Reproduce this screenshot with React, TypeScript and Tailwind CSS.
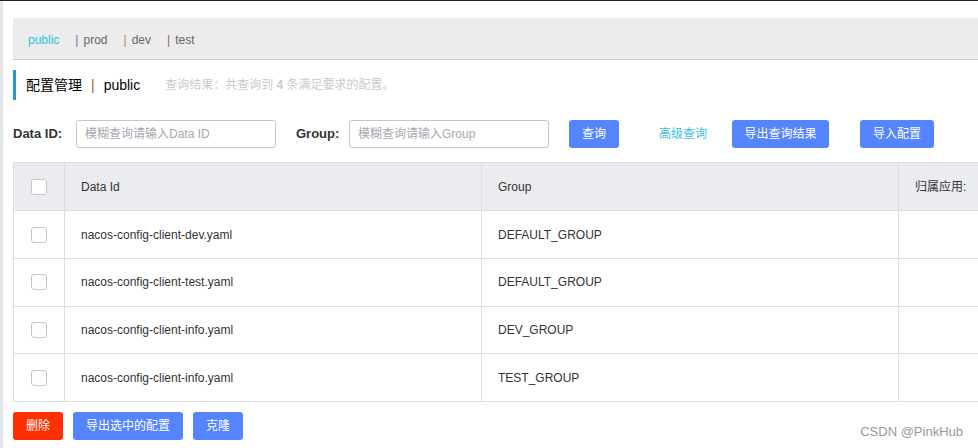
const rows = [
  { dataId: 'nacos-config-client-dev.yaml', group: 'DEFAULT_GROUP' },
  { dataId: 'nacos-config-client-test.yaml', group: 'DEFAULT_GROUP' },
  { dataId: 'nacos-config-client-info.yaml', group: 'DEV_GROUP' },
  { dataId: 'nacos-config-client-info.yaml', group: 'TEST_GROUP' },
];

const namespaces = [
  { name: 'prod', bar: 'text-[#6f6fa6]' },
  { name: 'dev', bar: 'text-[#c8843a]' },
  { name: 'test', bar: 'text-[#8c6458]' },
];

function Checkbox() {
  return <span className="block w-[16px] h-[16px] rounded-[3px] border border-[#c4c6cf] bg-white" />;
}

function Btn({ label, className }: { label: string; className?: string }) {
  return (
    <button
      className={`h-[28px] rounded-[3px] text-white text-[12px] flex items-center justify-center ${className ?? 'bg-[#5584ff]'}`}
    >
      {label}
    </button>
  );
}

export default function App() {
  return (
    <div className="relative w-full h-[448px] bg-white border-t border-[#1f2326] flex overflow-hidden font-['Liberation_Sans','Noto_Sans_CJK_SC',sans-serif] text-[#333]">
      <div className="w-[3px] shrink-0 bg-[#e3e6eb]" />
      <div className="flex-1 min-w-0 pl-[10px] overflow-hidden">
        {/* namespaces */}
        <div className="mt-[17px] h-[42px] bg-[#ececec] border-b border-[#cccccc] flex items-center pl-[15px] pt-[3px] text-[12px] text-[#666]">
          <span className="text-[#29c3e6] mr-[16px]">public</span>
          {namespaces.map((ns) => (
            <span key={ns.name} className="mr-[16px]">
              <span className={`${ns.bar} mr-[5px]`}>|</span>
              {ns.name}
            </span>
          ))}
        </div>

        {/* title */}
        <div className="mt-[10px] h-[30px] border-l-[3px] border-[#1e9bd3] flex items-center pl-[10px]">
          <span className="text-[14px] text-black">配置管理</span>
          <span className="text-[14px] text-[#a0632f] mx-[9px]">|</span>
          <span className="text-[14px] text-black">public</span>
          <span className="ml-[25px] text-[12px] text-[#c8cad0]">
            查询结果：共查询到 <b>4</b> 条满足要求的配置。
          </span>
        </div>

        {/* search */}
        <div className="mt-[20px] h-[28px] flex items-center">
          <span className="text-[13px] font-bold text-[#333] w-[50px]">Data ID:</span>
          <input
            placeholder="模糊查询请输入Data ID"
            className="ml-[13px] w-[200px] h-[28px] rounded-[3px] border border-[#c4c6cf] px-[8px] text-[12px] placeholder:text-[#a5a8b0] outline-none"
          />
          <span className="ml-[20px] text-[13px] font-bold text-[#333] w-[41px]">Group:</span>
          <input
            placeholder="模糊查询请输入Group"
            className="ml-[12px] w-[200px] h-[28px] rounded-[3px] border border-[#c4c6cf] px-[8px] text-[12px] placeholder:text-[#a5a8b0] outline-none"
          />
          <Btn label="查询" className="ml-[20px] w-[50px] bg-[#5584ff]" />
          <span className="ml-[40px] text-[12px] text-[#36c2e4]">高级查询</span>
          <Btn label="导出查询结果" className="ml-[25px] w-[97px] bg-[#5584ff]" />
          <Btn label="导入配置" className="ml-[31px] w-[74px] bg-[#5584ff]" />
        </div>

        {/* table */}
        <div className="mt-[14px] w-[1302px] border-t border-l border-[#dcdee3] text-[12px] text-[#333]">
          <div className="grid grid-cols-[51px_417px_417px_417px] h-[48px] bg-[#ebecf0] border-b border-[#dcdee3]">
            <div className="flex items-center justify-center border-r border-[#dcdee3]">
              <Checkbox />
            </div>
            <div className="flex items-center pl-[16px] border-r border-[#dcdee3]">Data Id</div>
            <div className="flex items-center pl-[16px] border-r border-[#dcdee3]">Group</div>
            <div className="flex items-center pl-[16px] border-r border-[#dcdee3]">归属应用:</div>
          </div>
          {rows.map((r, i) => (
            <div
              key={i}
              className={`grid grid-cols-[51px_417px_417px_417px] ${i === 0 ? 'h-[48px]' : 'h-[47.67px]'} bg-white border-b border-[#dcdee3]`}
            >
              <div className="flex items-center justify-center border-r border-[#dcdee3]">
                <Checkbox />
              </div>
              <div className="flex items-center pl-[16px] border-r border-[#dcdee3]">{r.dataId}</div>
              <div className="flex items-center pl-[16px] border-r border-[#dcdee3]">{r.group}</div>
              <div className="border-r border-[#dcdee3]" />
            </div>
          ))}
        </div>

        {/* bottom actions */}
        <div className="mt-[10px] flex gap-[10px]">
          <Btn label="删除" className="w-[50px] bg-[#ff3000]" />
          <Btn label="导出选中的配置" className="w-[110px] bg-[#5584ff]" />
          <Btn label="克隆" className="w-[50px] bg-[#5584ff]" />
        </div>
      </div>

      <span className="absolute right-[15px] bottom-[7px] text-[13px] text-[#999] font-['Liberation_Sans',sans-serif]">
        CSDN @PinkHub
      </span>
    </div>
  );
}
